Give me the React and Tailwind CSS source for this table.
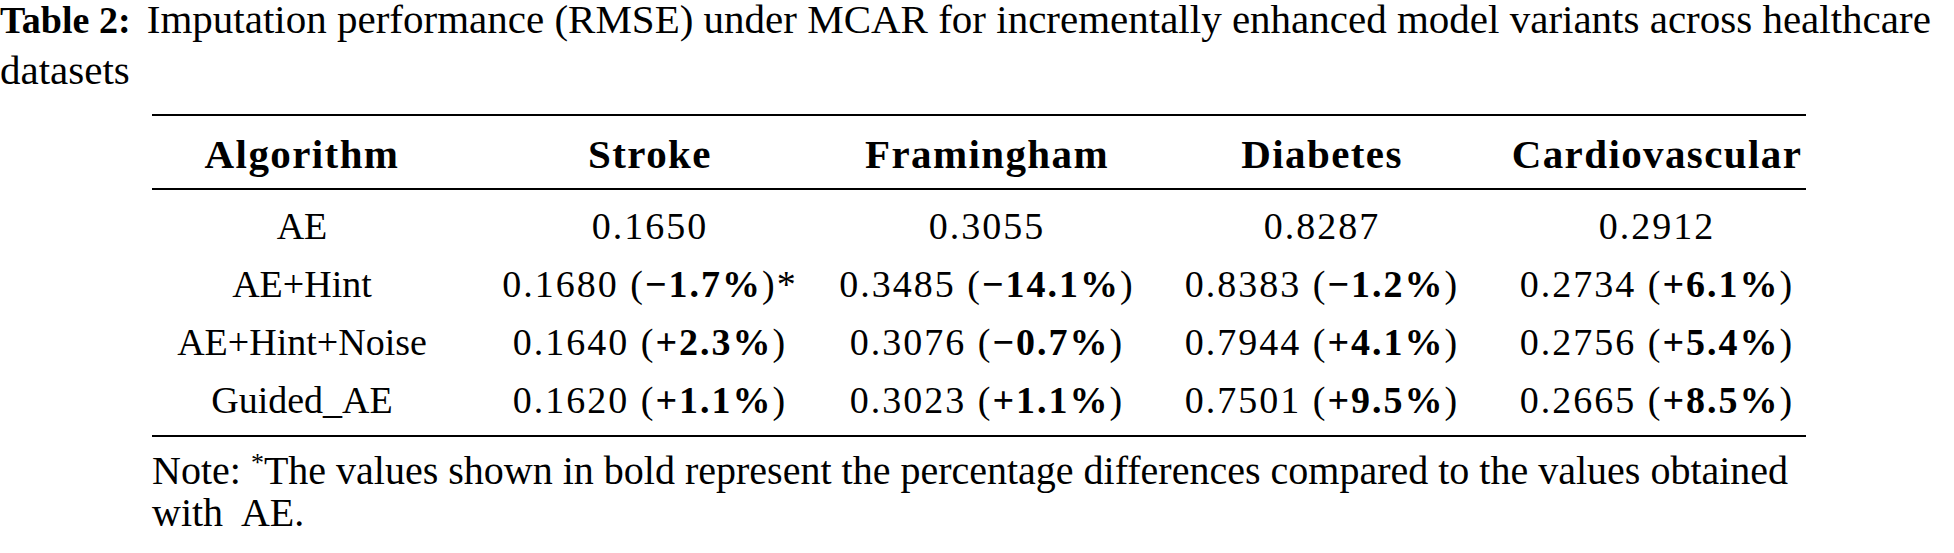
const serif = { fontFamily: '"Liberation Serif", "Times New Roman", serif' };

const headers = ["Algorithm", "Stroke", "Framingham", "Diabetes", "Cardiovascular"];

const rows = [
  { name: "AE", cells: [{ v: "0.1650" }, { v: "0.3055" }, { v: "0.8287" }, { v: "0.2912" }] },
  {
    name: "AE+Hint",
    cells: [
      { v: "0.1680", p: "−1.7%", star: true },
      { v: "0.3485", p: "−14.1%" },
      { v: "0.8383", p: "−1.2%" },
      { v: "0.2734", p: "+6.1%" },
    ],
  },
  {
    name: "AE+Hint+Noise",
    cells: [
      { v: "0.1640", p: "+2.3%" },
      { v: "0.3076", p: "−0.7%" },
      { v: "0.7944", p: "+4.1%" },
      { v: "0.2756", p: "+5.4%" },
    ],
  },
  {
    name: "Guided_AE",
    cells: [
      { v: "0.1620", p: "+1.1%" },
      { v: "0.3023", p: "+1.1%" },
      { v: "0.7501", p: "+9.5%" },
      { v: "0.2665", p: "+8.5%" },
    ],
  },
];

const cols = "grid grid-cols-[300px_396px_278px_392px_278px]";

function Cell({ children, className = "" }) {
  return <div className={`flex justify-center whitespace-nowrap ${className}`}>{children}</div>;
}

export default function App() {
  return (
    <div className="w-[1954px] h-[553px] bg-white text-black overflow-hidden" style={serif}>
      <p className="-mt-[6px] text-[41px] leading-[50px]">
        <b className="text-[38px] mr-[6px]">Table 2:</b> Imputation performance (RMSE) under MCAR for incrementally
        enhanced model variants across healthcare datasets
      </p>

      <div className="ml-[152px] w-[1654px] mt-[19px]">
        <div className="border-t-[2px] border-black" />
        <div className={`${cols} h-[72px] pt-[6px] items-center text-[41px] font-bold tracking-[1.4px]`}>
          {headers.map((h) => (
            <Cell key={h}>{h}</Cell>
          ))}
        </div>
        <div className="border-t-[2px] border-black" />

        <div className="pt-[7px] pb-[6px] text-[38px] leading-[58px]">
          {rows.map((r) => (
            <div key={r.name} className={cols}>
              <Cell>{r.name}</Cell>
              {r.cells.map((c, i) => (
                <Cell key={i} className="tracking-[2px]">
                  {c.v}
                  {c.p && (
                    <>
                      &nbsp;(<b>{c.p}</b>){c.star && "*"}
                    </>
                  )}
                </Cell>
              ))}
            </div>
          ))}
        </div>
        <div className="border-t-[2px] border-black" />

        <p className="mt-[13px] w-[1660px] text-[40px] leading-[42px]">
          Note: <sup className="text-[26px]">*</sup>The values shown in bold represent the percentage differences compared
          to the values obtained with&nbsp; AE.
        </p>
      </div>
    </div>
  );
}
